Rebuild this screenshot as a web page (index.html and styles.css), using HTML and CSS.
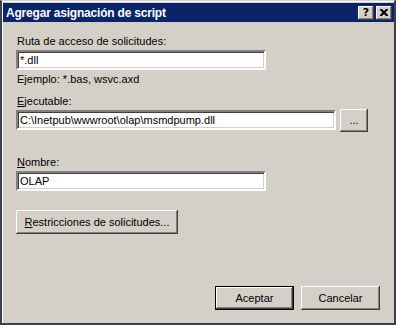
FILE: index.html
```html
<!DOCTYPE html>
<html lang="es">
<head>
    <meta charset="UTF-8">
    <title>Agregar asignación de script</title>
    <link rel="stylesheet" href="styles.css">
</head>
<body>
    <div class="window">
        <div class="titlebar">
            <span class="title">Agregar asignación de script</span>
            <div class="title-buttons">
                <button class="cap-button">?</button>
                <button class="cap-button close">
                    <svg width="8" height="7" viewBox="0 0 8 7"><path d="M0 0h2l2 2 2-2h2v1l-2.5 2.5L8 6v1H6L4 5 2 7H0V6l2.5-2.5L0 1z" fill="#000"/></svg>
                </button>
            </div>
        </div>
        <div class="content">
            <label class="label first">Ruta de acceso de solicitudes:</label>
            <input class="text-input short" type="text" value="*.dll">
            <div class="hint">Ejemplo: *.bas, wsvc.axd</div>

            <label class="label exe"><u>E</u>jecutable:</label>
            <div class="row">
                <input class="text-input long" type="text" value="C:\Inetpub\wwwroot\olap\msmdpump.dll">
                <button class="btn browse">...</button>
            </div>

            <label class="label name"><u>N</u>ombre:</label>
            <input class="text-input short" type="text" value="OLAP">

            <button class="btn restrict"><u>R</u>estricciones de solicitudes...</button>

            <div class="footer">
                <button class="btn default">Aceptar</button>
                <button class="btn">Cancelar</button>
            </div>
        </div>
    </div>
</body>
</html>
```
FILE: styles.css
```css
html, body {
    margin: 0;
    padding: 0;
}
body {
    width: 396px;
    height: 325px;
    font-family: "Liberation Sans", Arial, sans-serif;
    font-size: 11px;
    color: #000;
}
.window {
    box-sizing: border-box;
    width: 396px;
    height: 325px;
    background: #d4d0c8;
    border-left: 2px solid #3c4050;
    border-right: 2px solid #3c4050;
    border-bottom: 2px solid #3c4050;
    border-top: 1px solid #d4d0c8;
    box-shadow: inset 1px 1px #fff;
    padding: 2px 0 0 1px;
    display: flex;
    flex-direction: column;
}
.titlebar {
    height: 19px;
    flex: none;
    background: #0a246a;
    display: flex;
    align-items: center;
    justify-content: space-between;
    padding: 0 2px 0 3px;
}
.title {
    color: #fff;
    font-weight: bold;
    font-size: 12px;
    letter-spacing: -0.2px;
}
.title-buttons {
    display: flex;
    gap: 2px;
}
.cap-button {
    width: 16px;
    height: 14px;
    padding: 0;
    margin: 0;
    border: none;
    background: #d4d0c8;
    box-shadow: inset -1px -1px #404040, inset 1px 1px #fff, inset -2px -2px #808080;
    font-family: "DejaVu Sans", sans-serif;
    font-weight: bold;
    font-size: 11px;
    line-height: 14px;
    display: flex;
    align-items: center;
    justify-content: center;
}
.content {
    flex: 1;
    display: flex;
    flex-direction: column;
    align-items: flex-start;
    padding: 13px 14px 13px 13px;
}
.label {
    display: block;
    height: 13px;
    line-height: 13px;
    padding-left: 1px;
}
.label.exe {
    margin-top: 9px;
}
.label.name {
    margin-top: 24px;
}
.text-input {
    display: block;
    box-sizing: border-box;
    height: 20px;
    margin: 2px 0 0;
    padding: 0 2px;
    border: 2px solid;
    border-color: #808080 #fff #fff #808080;
    box-shadow: inset 1px 1px #404040, inset -1px -1px #d4d0c8;
    background: #fff;
    font-family: "Liberation Sans", Arial, sans-serif;
    font-size: 11px;
    color: #000;
    outline: none;
}
.short {
    width: 250px;
}
.long {
    width: 320px;
}
.hint {
    height: 13px;
    line-height: 13px;
    padding-left: 1px;
    margin-top: 3px;
}
.row {
    display: flex;
    align-items: flex-start;
    gap: 4px;
}
.btn {
    box-sizing: border-box;
    height: 23px;
    padding: 0 8px;
    margin: 0;
    border: none;
    background: #d4d0c8;
    box-shadow: inset -1px -1px #404040, inset 1px 1px #fff, inset -2px -2px #808080;
    font-family: "Liberation Sans", Arial, sans-serif;
    font-size: 11px;
    color: #000;
}
.browse {
    width: 28px;
    margin-top: 1px;
    padding: 0 0 2px;
}
.restrict {
    display: block;
    margin-top: 19px;
    width: 162px;
    height: 24px;
}
.footer {
    margin-top: auto;
    align-self: flex-end;
    display: flex;
    gap: 7px;
}
.footer .btn {
    width: 79px;
    height: 24px;
}
.btn.default {
    box-shadow: inset 0 0 0 1px #000, inset -2px -2px #404040, inset 2px 2px #fff, inset -3px -3px #808080;
}
```
